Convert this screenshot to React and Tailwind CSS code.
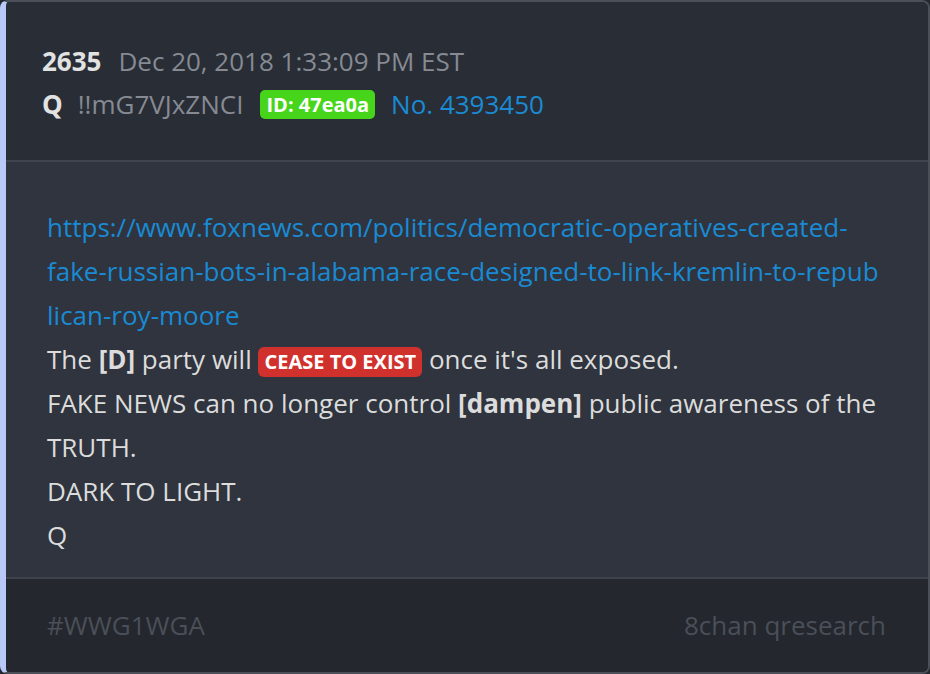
const App = () => {
    return (
        <div className="w-[930px] h-[674px] bg-[#24272e]" style={{ fontFamily: '"Open Sans", "Noto Sans", sans-serif' }}>
            <div className="h-full flex flex-col rounded-lg overflow-hidden border-2 border-[#4a4f58] border-l-[6px] border-l-[#b9c9f7]">

                {/* Header */}
                <div className="bg-[#292d36] pt-[38px] pb-[34px] pl-[36px] text-[26px] leading-[43px] border-b-2 border-[#3e434c]">
                    <div className="flex items-center">
                        <span className="font-bold text-[#e2e2e2]">2635</span>
                        <span className="ml-[17px] text-[#858a93]">Dec 20, 2018 1:33:09 PM EST</span>
                    </div>
                    <div className="flex items-center">
                        <span className="font-bold text-[#e2e2e2]">Q</span>
                        <span className="ml-[15px] text-[#858a93]">!!mG7VJxZNCI</span>
                        <span className="ml-[17px] bg-[#46d51b] text-white font-bold text-[20px] leading-[29px] px-[6px] rounded-[5px]">ID: 47ea0a</span>
                        <span className="ml-[16px] text-[#1a8ad3]">No. 4393450</span>
                    </div>
                </div>

                {/* Body */}
                <div className="flex-1 bg-[#2f343e] pt-[43px] pl-[41px] pr-[36px] text-[26px] leading-[44px] text-[#dcdcdc] border-b-2 border-[#3e434c]">
                    <a href="#" className="block text-[#1a8ad3]">
                        https://www.foxnews.com/politics/democratic-operatives-created-<br />
                        fake-russian-bots-in-alabama-race-designed-to-link-kremlin-to-repub<br />
                        lican-roy-moore
                    </a>
                    <p>
                        The <span className="font-bold">[D]</span> party will{' '}
                        <span className="inline-block bg-[#d1312d] text-white font-bold text-[20px] leading-[30px] px-[6px] rounded-[6px] align-middle">CEASE TO EXIST</span>{' '}
                        once it's all exposed.
                    </p>
                    <p>FAKE NEWS can no longer control <span className="font-bold">[dampen]</span> public awareness of the TRUTH.</p>
                    <p>DARK TO LIGHT.</p>
                    <p>Q</p>
                </div>

                {/* Footer */}
                <div className="h-[93px] bg-[#24272e] flex items-center justify-between pl-[41px] pr-[42px] text-[26px] text-[#4a4f58]">
                    <span>#WWG1WGA</span>
                    <span>8chan qresearch</span>
                </div>
            </div>
        </div>
    );
};

export default App;
